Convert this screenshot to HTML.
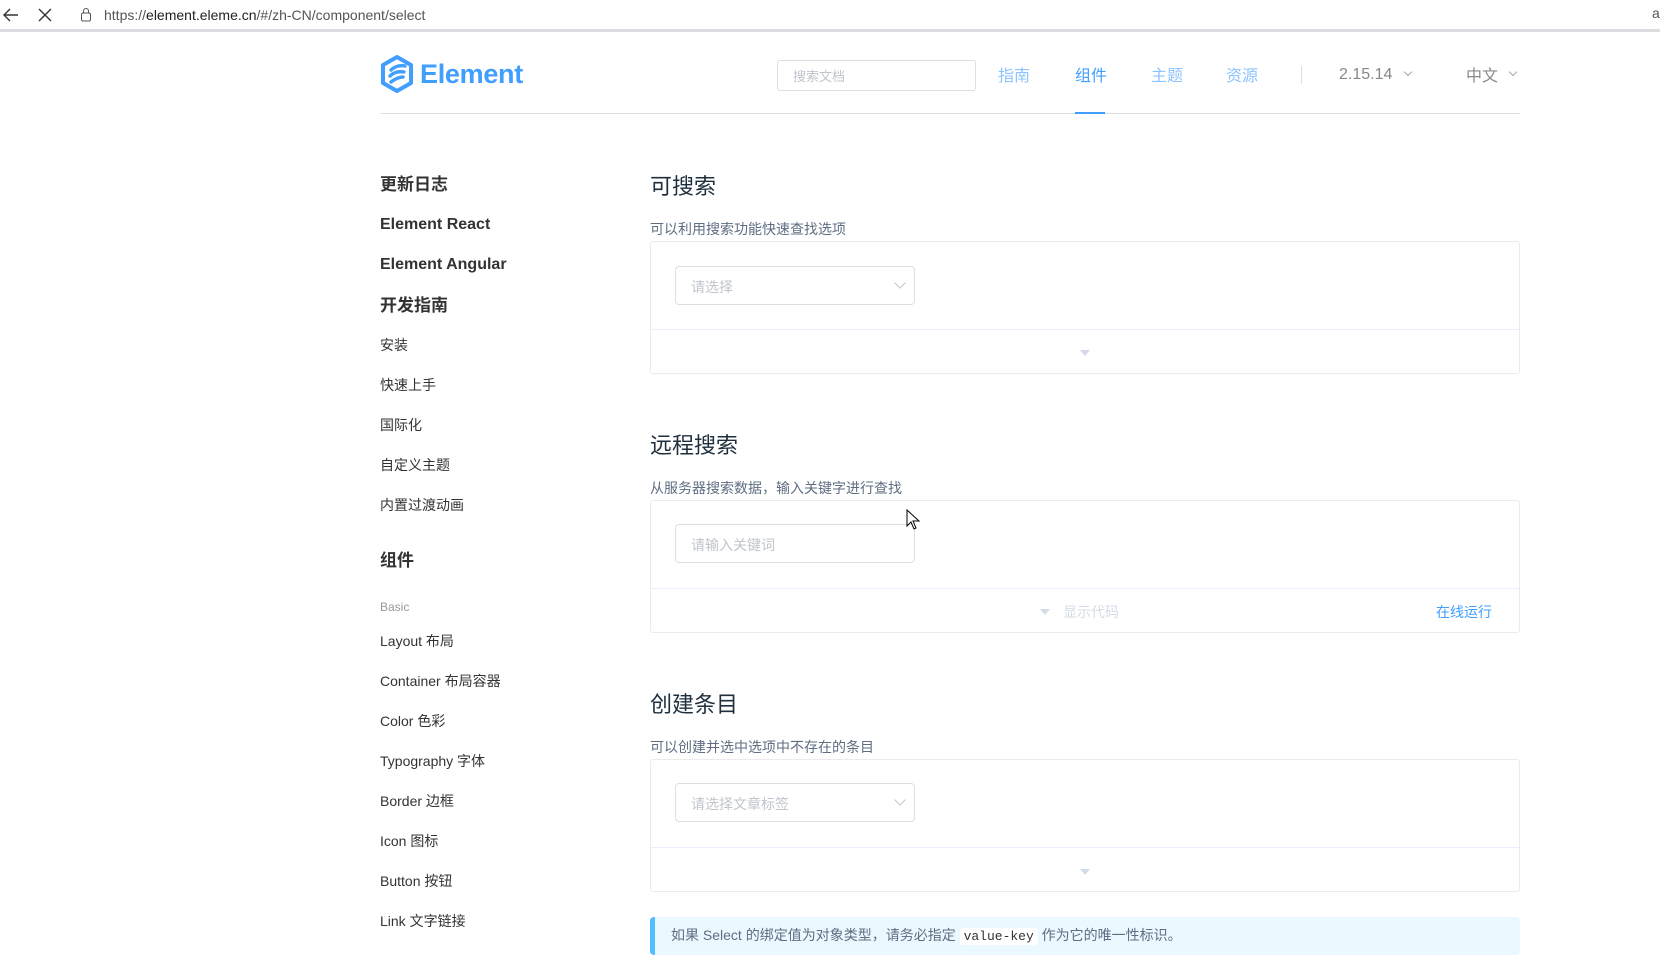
<!DOCTYPE html>
<html><head><meta charset="utf-8"><style>
*{margin:0;padding:0;box-sizing:border-box}
body{width:1660px;height:958px;overflow:hidden;background:#fff;font-family:"Liberation Sans","Noto Sans CJK SC",sans-serif;position:relative}
.a{position:absolute;white-space:nowrap}
.side{left:380px;font-size:14px;color:#333}
.sh{font-size:17px;font-weight:bold;color:#333}
.h3{left:650px;font-size:22px;color:#1f2f3d}
.desc{left:650px;font-size:14px;color:#5e6d82}
.box{left:650px;width:870px;border:1px solid #ebebeb;border-radius:3px}
.div{left:651px;width:868px;height:1px;background:#eaeefb}
.sel{left:675px;width:240px;height:39px;border:1px solid #dcdfe6;border-radius:4px;font-size:14px;color:#c0c4cc;padding:10px 0 0 15px}
.chev{position:absolute;right:10px;top:12px;width:8px;height:8px;border-right:1px solid #c0c4cc;border-bottom:1px solid #c0c4cc;transform:rotate(45deg)}
.tri{width:0;height:0;border-left:5px solid transparent;border-right:5px solid transparent;border-top:6px solid #d3dce6}
</style></head><body>
<div class="a" style="left:0;top:0;width:1660px;height:32px;background:#fff;border-bottom:3px solid #dadce0"></div>
<svg class="a" style="left:2px;top:7px" width="18" height="16" viewBox="0 0 18 16"><path d="M16 8H3M8 2L2 8l6 6" fill="none" stroke="#333" stroke-width="1.4"/></svg>
<svg class="a" style="left:38px;top:8px" width="14" height="14"><path d="M1 1l12 12M13 1L1 13" stroke="#333" stroke-width="1.4"/></svg>
<svg class="a" style="left:80px;top:7px" width="12" height="16"><rect x="1.5" y="6" width="9" height="8" rx="1.5" fill="none" stroke="#555"/><path d="M3.5 6V4a2.5 2.5 0 015 0v2" fill="none" stroke="#555"/></svg>
<div class="a" style="left:104px;top:7px;font-size:14px;color:#555">https://<span style="color:#222">element.eleme.cn</span>/#/zh-CN/component/select</div>
<div class="a" style="left:1652px;top:5px;font-size:14px;color:#555">a</div>

<svg class="a" style="left:380px;top:55px" width="34" height="38" viewBox="0 0 34 38"><path d="M17 2L31 10V28L17 36L3 28V10Z" fill="none" stroke="#409eff" stroke-width="4" stroke-linejoin="round"/><path d="M11 15c4-4 10-5 14-4M10 21c4-4 10-5 14-4M11 27c4-3 8-5 12-5" fill="none" stroke="#409eff" stroke-width="3.4" stroke-linecap="round"/></svg>
<div class="a" style="left:420px;top:59px;font-size:27px;font-weight:bold;color:#409eff;letter-spacing:-0.3px">Element</div>
<div class="a" style="left:777px;top:60px;width:199px;height:31px;border:1px solid #dcdfe6;border-radius:3px;font-size:13px;color:#c0c4cc;padding:5px 0 0 15px">搜索文档</div>
<div class="a" style="left:998px;top:62px;font-size:16px;color:#8dc3ff">指南</div>
<div class="a" style="left:1075px;top:62px;font-size:16px;color:#409eff">组件</div>
<div class="a" style="left:1151px;top:62px;font-size:16px;color:#8dc3ff">主题</div>
<div class="a" style="left:1226px;top:62px;font-size:16px;color:#8dc3ff">资源</div>
<div class="a" style="left:1301px;top:66px;width:1px;height:18px;background:#dcdfe6"></div>
<div class="a" style="left:1339px;top:66px;font-size:16px;color:#888">2.15.14</div>
<div class="a" style="left:1405px;top:69px;width:6px;height:6px;border-right:1px solid #aaa;border-bottom:1px solid #aaa;transform:rotate(45deg)"></div>
<div class="a" style="left:1466px;top:62px;font-size:16px;color:#888">中文</div>
<div class="a" style="left:1510px;top:69px;width:6px;height:6px;border-right:1px solid #aaa;border-bottom:1px solid #aaa;transform:rotate(45deg)"></div>
<div class="a" style="left:380px;top:113px;width:1140px;height:1px;background:#dcdfe6"></div>
<div class="a" style="left:1075px;top:112px;width:30px;height:2px;background:#409eff"></div>

<div class="a side sh" style="top:170px">更新日志</div>
<div class="a side sh" style="top:216px;font-size:16px">Element React</div>
<div class="a side sh" style="top:256px;font-size:16px">Element Angular</div>
<div class="a side sh" style="top:291px">开发指南</div>
<div class="a side" style="top:335px">安装</div>
<div class="a side" style="top:375px">快速上手</div>
<div class="a side" style="top:415px">国际化</div>
<div class="a side" style="top:455px">自定义主题</div>
<div class="a side" style="top:495px">内置过渡动画</div>
<div class="a side sh" style="top:546px">组件</div>
<div class="a side" style="top:600px;font-size:12px;color:#999">Basic</div>
<div class="a side" style="top:631px">Layout 布局</div>
<div class="a side" style="top:671px">Container 布局容器</div>
<div class="a side" style="top:711px">Color 色彩</div>
<div class="a side" style="top:751px">Typography 字体</div>
<div class="a side" style="top:791px">Border 边框</div>
<div class="a side" style="top:831px">Icon 图标</div>
<div class="a side" style="top:871px">Button 按钮</div>
<div class="a side" style="top:911px">Link 文字链接</div>

<div class="a h3" style="top:169px">可搜索</div>
<div class="a desc" style="top:219px">可以利用搜索功能快速查找选项</div>
<div class="a box" style="top:241px;height:133px"></div>
<div class="a div" style="top:329px"></div>
<div class="a sel" style="top:266px">请选择<span class="chev"></span></div>
<div class="a tri" style="left:1080px;top:350px"></div>

<div class="a h3" style="top:428px">远程搜索</div>
<div class="a desc" style="top:478px">从服务器搜索数据，输入关键字进行查找</div>
<div class="a box" style="top:500px;height:133px"></div>
<div class="a div" style="top:588px"></div>
<div class="a sel" style="top:524px">请输入关键词</div>
<div class="a tri" style="left:1040px;top:609px"></div>
<div class="a" style="left:1063px;top:602px;font-size:14px;color:#d3dce6">显示代码</div>
<div class="a" style="left:1436px;top:602px;font-size:14px;color:#409eff">在线运行</div>
<svg class="a" style="left:906px;top:509px" width="14" height="22"><path d="M1 1v16l4-4 3 7 2-1-3-7h6z" fill="#fff" stroke="#000"/></svg>

<div class="a h3" style="top:687px">创建条目</div>
<div class="a desc" style="top:737px">可以创建并选中选项中不存在的条目</div>
<div class="a box" style="top:759px;height:133px"></div>
<div class="a div" style="top:847px"></div>
<div class="a sel" style="top:783px">请选择文章标签<span class="chev"></span></div>
<div class="a tri" style="left:1080px;top:869px"></div>

<div class="a" style="left:650px;top:917px;width:870px;height:38px;background:#ecf8ff;border-left:5px solid #50bfff;border-radius:4px;font-size:14px;color:#5e6d82;padding:8px 0 0 16px">如果 Select 的绑定值为对象类型，请务必指定 <code style="font-family:'Liberation Mono',monospace;font-size:13px;color:#333;background:#fff;padding:1px 4px;border-radius:3px">value-key</code> 作为它的唯一性标识。</div>
</body></html>
